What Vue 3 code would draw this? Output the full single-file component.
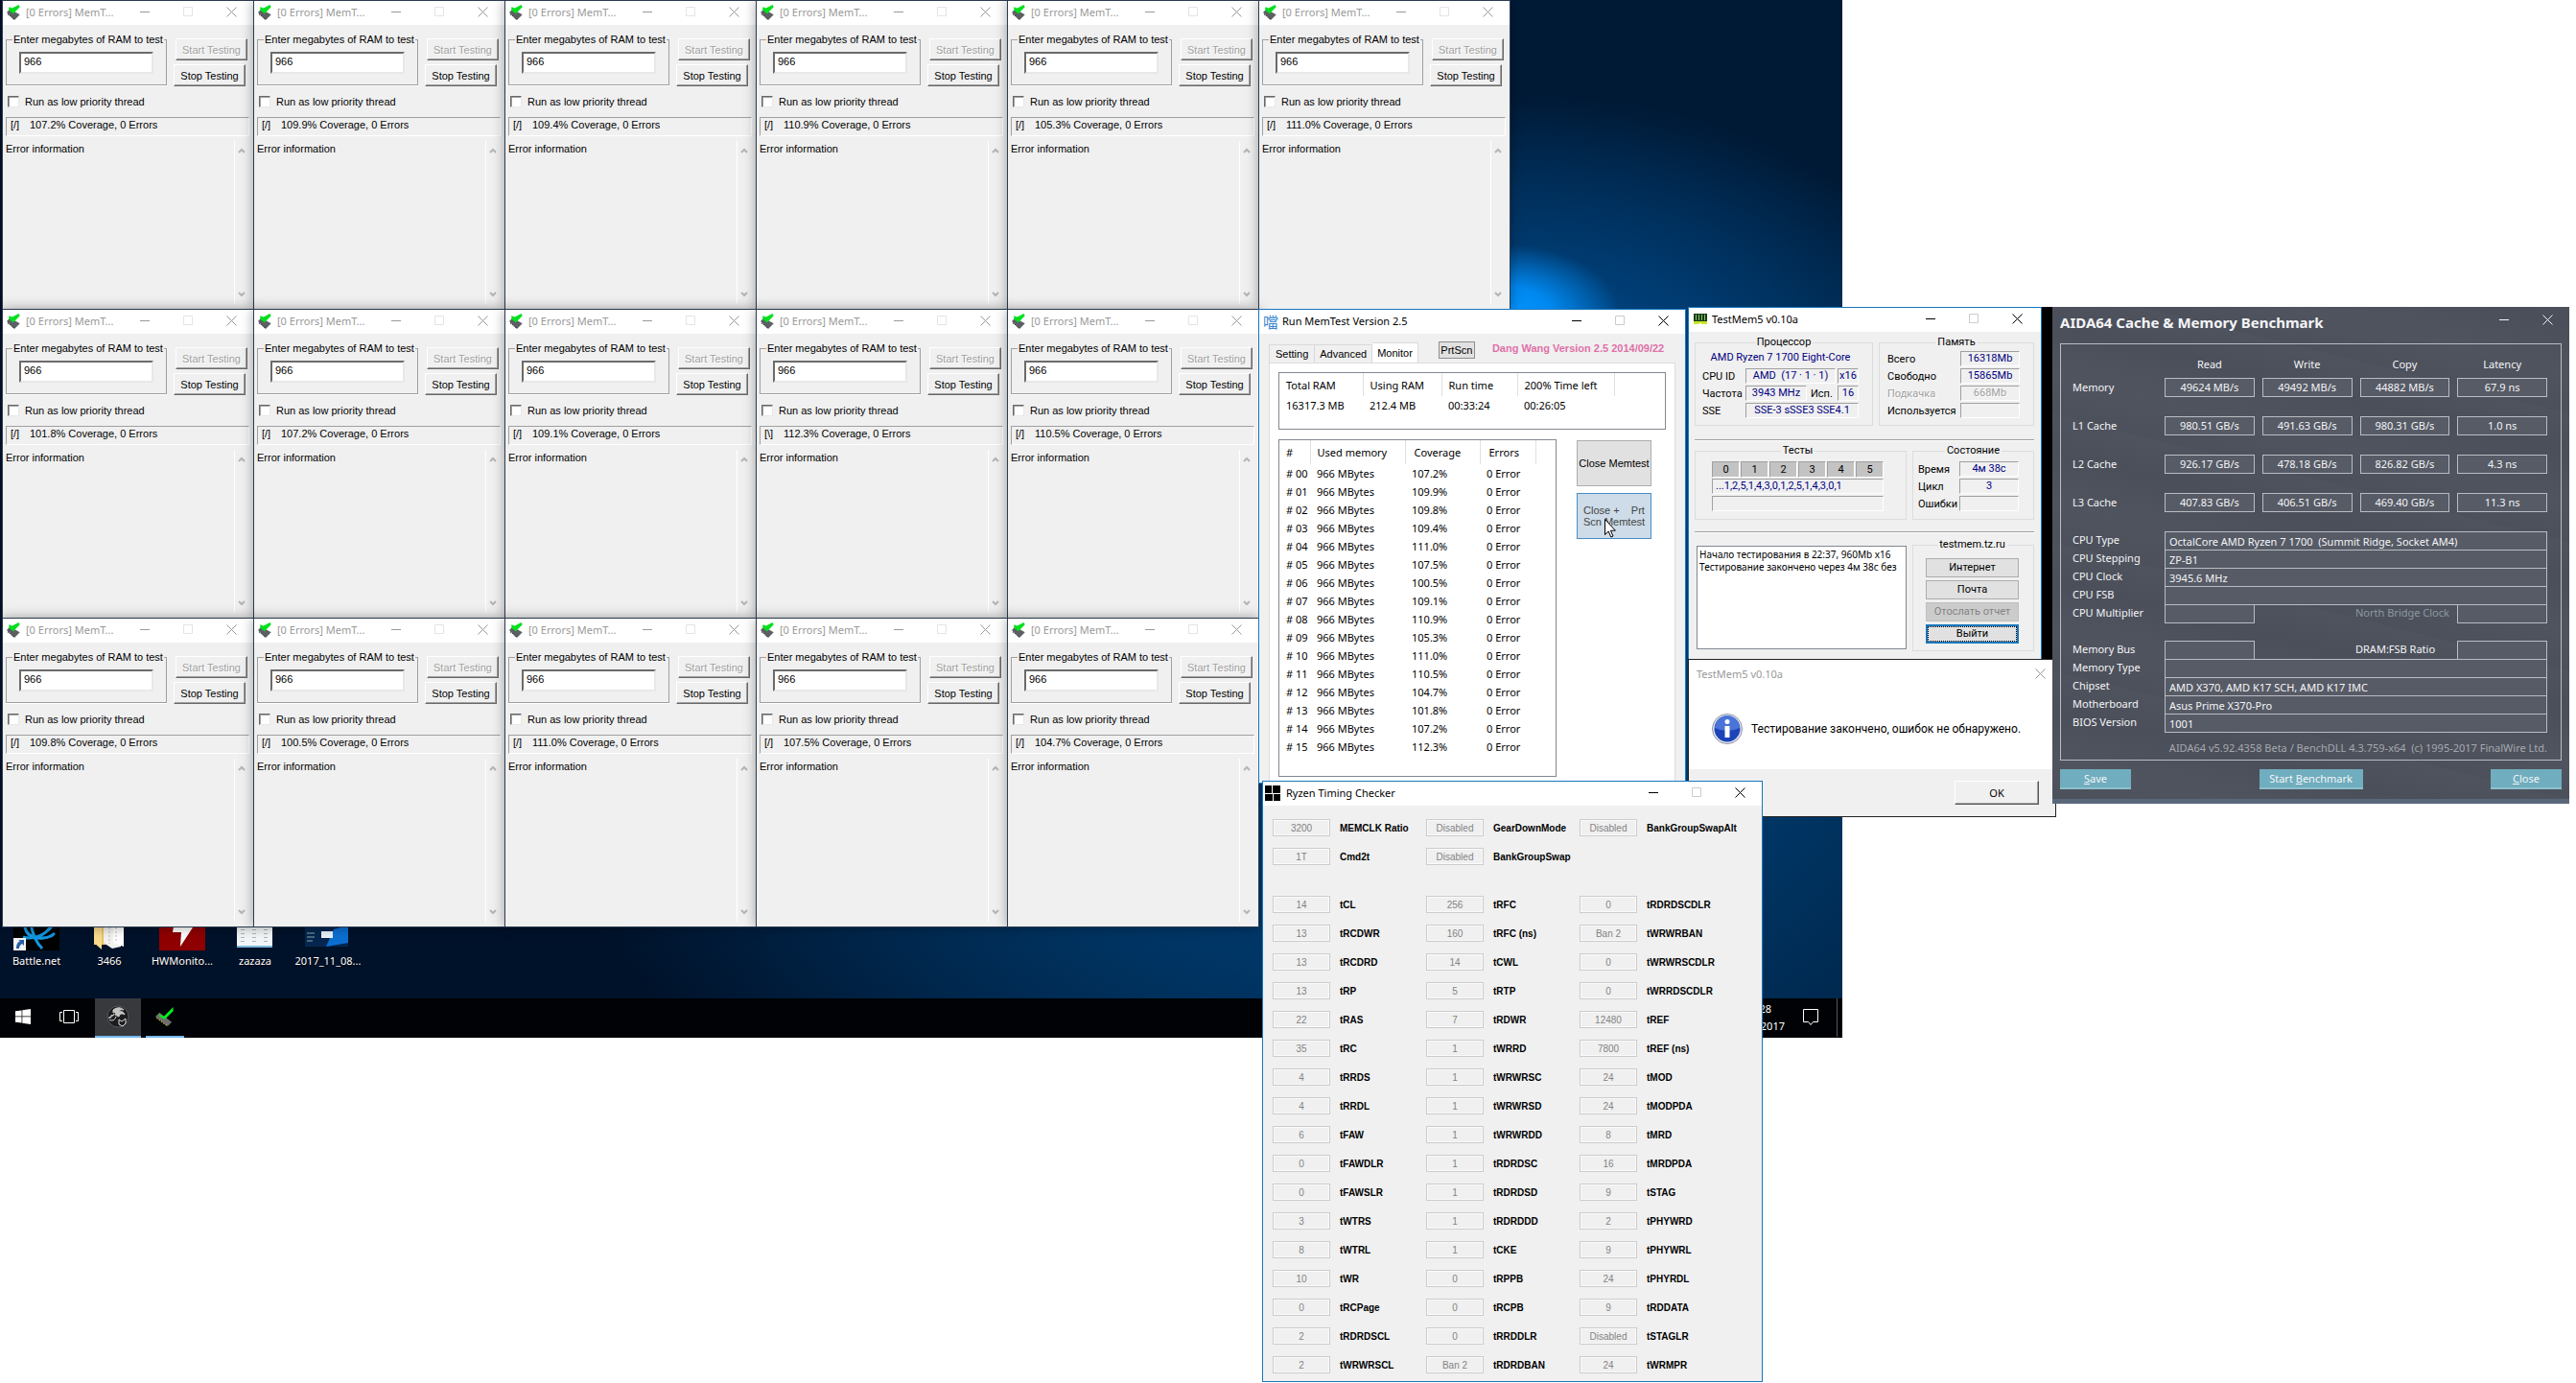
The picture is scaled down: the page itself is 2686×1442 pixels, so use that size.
<template>
  <main class="stage">
    <section class="desktop">
      <ul class="shortcuts">
        <li v-for="item in shortcuts" :key="item.label">
          <svg width="48" height="48" viewBox="0 0 48 48">
            <g v-if="item.icon === 'battle'">
              <rect width="48" height="48" fill="#000" />
              <g fill="none" stroke="#1297e0" stroke-width="3">
                <path d="M12 24c2 12 22 14 31 6M10 34c12 4 26-4 32-14M18 20c2 12 6 20 12 26" />
                <path d="M22 36c8-2 16-10 18-18M14 30c4 6 18 8 28 2" stroke-width="2" />
              </g>
              <rect y="35" width="13" height="13" fill="#f4f4f4" />
              <path d="M3 46c0-5 2-7 4-8l-2-1h6v6l-2-2c-2 1-3 3-3 5z" fill="#2b5fa8" />
            </g>
            <g v-else-if="item.icon === 'folder'">
              <path d="M8 6h20v36H8z" fill="#e9c469" />
              <path d="M18 10h18v34l-9 2-9-6z" fill="#f2f2f0" />
              <path d="M28 8h11v36l-11-4z" fill="#fff" />
              <path d="M31 12v28M24 12v29" stroke="#bbb" stroke-dasharray="2 2" />
              <path d="M8 6l8 6v35l-8-7z" fill="#f8dc8c" />
            </g>
            <g v-else-if="item.icon === 'bolt'">
              <rect width="48" height="48" fill="#8f0000" />
              <path d="M18 4h16l-4 20h5L22 44l1-15h-9z" fill="#fff" />
            </g>
            <g v-else-if="item.icon === 'sheet'">
              <rect x="5" width="37" height="44" fill="#f3f6f8" />
              <path d="M11 2v40M23 2v40M35 2v40" stroke="#b3b3b3" stroke-width="4" stroke-dasharray="1 3" />
              <path d="M5 44h37" stroke="#7cb6dc" stroke-width="2" />
            </g>
            <g v-else>
              <rect y="10" width="45" height="34" fill="#05264f" />
              <path d="M22 44l8-18 15-4v18z" fill="#0b6fd0" />
              <rect y="10" width="45" height="14" fill="#dfe8f0" />
              <rect x="17" y="28" width="12" height="7" fill="#e8f2fb" />
              <path d="M2 30h8M2 34h8M2 38h6" stroke="#8aa" />
            </g>
          </svg>
          <span>{{ item.label }}</span>
        </li>
      </ul>

      <nav class="taskbar">
        <button class="task" aria-label="Start">
          <svg width="16" height="16" viewBox="0 0 16 16" fill="#fff">
            <path d="M0 2.300L6.600 1.400v6.200H0zM7.300 1.300L16 0v7.600H7.300zM0 8.300h6.600v6.300L0 13.700zM7.300 8.300H16V16l-8.700-1.300z" />
          </svg>
        </button>
        <button class="task" aria-label="Task view">
          <svg width="20" height="16" viewBox="0 0 20 16" fill="none" stroke="#fff">
            <path d="M4.500 1.500h11v13h-11zM3 3.500H.5v9H3M17 3.500h2.500v9H17" />
          </svg>
        </button>
        <button class="task active" aria-label="Game client">
          <svg width="24" height="24" viewBox="0 0 24 24">
            <circle cx="12" cy="12" r="11" fill="#1c1c1e" stroke="#55585c" />
            <path
              d="M2 13c3 1 4-1 3-3 1 2 3 1 3-1M7 5c4-3 8-3 11 0-3-1-4 0-5 2 3-1 5 0 6 3-3-2-5-1-6 2l-4-2 1-3-3 1z"
              fill="#c5c5c5"
              stroke="#c5c5c5"
            />
            <path d="M13 15l3 2 4-3v5l-3 3-4-2zM3 15c2 2 6 1 7-3" fill="none" stroke="#e0e0e0" />
          </svg>
        </button>
        <button class="task memtest" aria-label="MemTest">
          <svg width="20" height="20" viewBox="0 0 14 14">
            <path d="M0 7l3-3 9 7-3 3z" fill="#6d6d6d" />
            <path d="M1 8l8 6" stroke="#b8a93a" stroke-dasharray="1 1" />
            <path d="M3 5l3 2 7-7v3L7 9 3 7z" fill="#00f01c" />
          </svg>
        </button>
        <div class="tray">
          <p class="clock"><span class="time">28</span><span>2017</span></p>
          <svg width="16" height="18" viewBox="0 0 16 18" fill="none" stroke="#fff">
            <path d="M.5.5h15v13h-5l-2.500 3-2.500-3h-5z" />
          </svg>
          <i class="peek"></i>
        </div>
      </nav>
    </section>

    <div class="void"></div>

    <section
      v-for="win in windows"
      :key="win.id"
      class="window"
      :class="win.kind"
      :style="{ left: win.x + 'px', top: win.y + 'px' }"
    >
      <header>
        <svg v-if="win.kind === 'mem'" width="16" height="16" viewBox="0 0 14 14">
          <path d="M0 7l3-3 9 5-5 5z" fill="#5c6064" />
          <path d="M1 8.500l6 5" stroke="#333" stroke-dasharray="1 1" />
          <path d="M2 2l3 1 6-3 1 2-6 6-4-3z" fill="#00e01c" />
        </svg>
        <span v-else-if="win.kind === 'run'" class="glyph">噹</span>
        <svg v-else-if="win.kind === 'tm5'" width="16" height="12" viewBox="0 0 16 12">
          <path d="M1 0h14v8H1z" fill="#143c14" />
          <path d="M3.500 1v6M6.500 1v6M9.500 1v6M12.500 1v6" stroke="#8dc26b" />
          <path d="M1 8h14v3H9v-1H7v1H1z" fill="#c8e62c" />
        </svg>
        <svg v-else-if="win.kind === 'rtc'" width="16" height="16" viewBox="0 0 16 16">
          <path d="M0 0h16v16H0z" fill="#000" />
          <path d="M7.500 0v8M0 8.500h16M8.500 9v7" stroke="#fff" />
        </svg>
        <h2>{{ win.title }}</h2>
        <div class="caption">
          <button v-if="win.kind !== 'msg'" aria-label="Minimize">
            <svg width="11" height="11" viewBox="0 0 11 11"><path d="M0 5.500h10" /></svg>
          </button>
          <button v-if="win.kind !== 'msg' && win.kind !== 'aida'" class="max" aria-label="Maximize" disabled>
            <svg width="11" height="11" viewBox="0 0 11 11"><path d="M.5.5h9v9h-9z" /></svg>
          </button>
          <button aria-label="Close">
            <svg width="11" height="11" viewBox="0 0 11 11"><path d="M.5.5l10 10M10.500.5l-10 10" /></svg>
          </button>
        </div>
      </header>

      <div v-if="win.kind === 'mem'" class="body">
        <div class="top">
          <fieldset>
            <legend>Enter megabytes of RAM to test</legend>
            <input type="text" value="966" aria-label="Megabytes of RAM" />
          </fieldset>
          <div class="actions">
            <button class="start" disabled>Start Testing</button>
            <button>Stop Testing</button>
          </div>
        </div>
        <div class="check">
          <input :id="'low-' + win.id" type="checkbox" />
          <label :for="'low-' + win.id">Run as low priority thread</label>
        </div>
        <p class="status"><span>{{ win.mark }}</span>{{ win.coverage }}% Coverage, 0 Errors</p>
        <div class="errors">
          <p>Error information</p>
          <div class="scroll">
            <svg width="8" height="6" viewBox="0 0 8 6"><path d="M1 5l3-3 3 3" /></svg>
            <svg width="8" height="6" viewBox="0 0 8 6"><path d="M1 1l3 3 3-3" /></svg>
          </div>
        </div>
      </div>

      <div v-else-if="win.kind === 'run'" class="body">
        <div class="tabs">
          <button class="tab">Setting</button>
          <button class="tab">Advanced</button>
          <button class="tab current">Monitor</button>
          <button class="prt">PrtScn</button>
          <strong>Dang Wang Version 2.5 2014/09/22</strong>
        </div>
        <div class="panel">
          <div class="list summary">
            <table>
              <thead>
                <tr><th>Total RAM</th><th>Using RAM</th><th>Run time</th><th>200% Time left</th></tr>
              </thead>
              <tbody>
                <tr><td>16317.3 MB</td><td>212.4 MB</td><td>00:33:24</td><td>00:26:05</td></tr>
              </tbody>
            </table>
          </div>
          <div class="split">
            <div class="list detail">
              <table>
                <thead>
                  <tr><th>#</th><th>Used memory</th><th>Coverage</th><th>Errors</th></tr>
                </thead>
                <tbody>
                  <tr v-for="(value, i) in coverage" :key="i">
                    <td># {{ String(i).padStart(2, '0') }}</td>
                    <td>966 MBytes</td>
                    <td>{{ value }}%</td>
                    <td>0 Error</td>
                  </tr>
                </tbody>
              </table>
            </div>
            <div class="side">
              <button>Close Memtest</button>
              <button class="hover">{{ 'Close +    Prt\nScn Memtest' }}</button>
            </div>
          </div>
        </div>
      </div>

      <div v-else-if="win.kind === 'tm5'" class="body">
        <div class="row cpu-row">
          <fieldset class="cpu">
            <legend>Процессор</legend>
            <p class="model">AMD Ryzen 7 1700 Eight-Core</p>
            <span>CPU ID</span><b class="wide">AMD&nbsp; (17 · 1 · 1)</b><b>x16</b>
            <span>Частота</span><b>3943 MHz</b><span class="used">Исп.</span><b>16</b>
            <span>SSE</span><b class="full">SSE-3 sSSE3 SSE4.1</b>
          </fieldset>
          <fieldset class="pairs">
            <legend>Память</legend>
            <span>Всего</span><b>16318Mb</b>
            <span>Свободно</span><b>15865Mb</b>
            <span class="off">Подкачка</span><b class="off">668Mb</b>
            <span>Используется</span><b></b>
          </fieldset>
        </div>
        <hr />
        <div class="row test-row">
          <fieldset class="tests">
            <legend>Тесты</legend>
            <div class="cells"><i v-for="n in 6" :key="n">{{ n - 1 }}</i></div>
            <b>...1,2,5,1,4,3,0,1,2,5,1,4,3,0,1</b>
            <b></b>
          </fieldset>
          <fieldset class="pairs state">
            <legend>Состояние</legend>
            <span>Время</span><b>4м 38с</b>
            <span>Цикл</span><b>3</b>
            <span>Ошибки</span><b></b>
          </fieldset>
        </div>
        <hr />
        <div class="row log-row">
          <ul class="log">
            <li>Начало тестирования в 22:37, 960Mb x16</li>
            <li>Тестирование закончено через 4м 38с без</li>
          </ul>
          <fieldset class="links">
            <legend>testmem.tz.ru</legend>
            <button>Интернет</button>
            <button>Почта</button>
            <button disabled>Отослать отчет</button>
            <button class="focused">Выйти</button>
          </fieldset>
        </div>
      </div>

      <div v-else-if="win.kind === 'msg'" class="body">
        <div class="message">
          <svg width="32" height="32" viewBox="0 0 32 32">
            <circle cx="16" cy="16" r="15.500" fill="#e4e6ee" stroke="#8c93a5" />
            <circle cx="16" cy="16" r="13.500" fill="#1c43b8" />
            <path d="M3 15a13 13 0 0 1 26 0q-13 6-26 0z" fill="#4a74d8" />
            <circle cx="16" cy="8.500" r="2.500" fill="#fff" />
            <path d="M13.500 13h5v12h-5z" fill="#fff" />
          </svg>
          <p>Тестирование закончено, ошибок не обнаружено.</p>
        </div>
        <footer><button>OK</button></footer>
      </div>

      <div v-else-if="win.kind === 'aida'" class="body">
        <div class="frame">
          <table class="bench">
            <thead>
              <tr><td></td><th>Read</th><th>Write</th><th>Copy</th><th>Latency</th></tr>
            </thead>
            <tbody>
              <tr v-for="row in bench" :key="row[0]">
                <th>{{ row[0] }}</th>
                <td v-for="cell in row.slice(1)" :key="cell"><span>{{ cell }}</span></td>
              </tr>
            </tbody>
          </table>
          <div class="facts">
            <template v-for="(fact, i) in facts" :key="i">
              <label :for="'fact-' + i">{{ fact.label }}</label>
              <input v-if="!fact.extra" :id="'fact-' + i" class="long" :value="fact.value" readonly />
              <template v-else>
                <input :id="'fact-' + i" readonly />
                <label class="extra" :class="{ dim: fact.dim }" :for="'extra-' + i">{{ fact.extra }}</label>
                <input :id="'extra-' + i" readonly />
                <i v-if="fact.dim" class="gap"></i>
              </template>
            </template>
          </div>
          <p class="version">AIDA64 v5.92.4358 Beta / BenchDLL 4.3.759-x64&nbsp; (c) 1995-2017 FinalWire Ltd.</p>
        </div>
        <footer>
          <button><u>S</u>ave</button>
          <button class="bench-start">Start <u>B</u>enchmark</button>
          <button><u>C</u>lose</button>
        </footer>
      </div>

      <div v-else class="body">
        <div v-for="(row, r) in timings" :key="r" class="timing" :class="{ last: r === 1 }">
          <template v-for="(cell, c) in row" :key="c">
            <input :id="'t-' + r + '-' + c" :value="cell[0]" disabled />
            <label :for="'t-' + r + '-' + c">{{ cell[1] }}</label>
          </template>
        </div>
      </div>
    </section>

    <svg class="pointer" width="12" height="20" viewBox="0 0 12 20">
      <path d="M.5.5v16l3.700-3.500 2.600 6 2.200-1-2.600-5.800h5z" fill="#fff" stroke="#000" />
    </svg>
  </main>
</template>

<script setup>
const shortcuts = [
  { label: 'Battle.net', icon: 'battle' },
  { label: '3466', icon: 'folder' },
  { label: 'HWMonito...', icon: 'bolt' },
  { label: 'zazaza', icon: 'sheet' },
  { label: '2017_11_08...', icon: 'shot' },
]

// MemTest instances, tiled row by row
const tiles = [
  ['107.2', '109.9', '109.4', '110.9', '105.3', '111.0'],
  ['101.8', '107.2', '109.1', '112.3', '110.5'],
  ['109.8', '100.5', '111.0', '107.5', '104.7'],
]

const memtests = tiles.flatMap((row, r) =>
  row.map((value, c) => ({
    id: `mem-${r}-${c}`,
    kind: 'mem',
    title: '[0 Errors] MemT...',
    x: 2 + c * 262,
    y: r * 322,
    coverage: value,
    mark: value === '112.3' ? '[\\]' : '[/]',
  }))
)

const windows = [
  ...memtests,
  { id: 'run', kind: 'run', title: 'Run MemTest Version 2.5', x: 1312, y: 322 },
  { id: 'tm5', kind: 'tm5', title: 'TestMem5 v0.10a', x: 1760, y: 320 },
  { id: 'msg', kind: 'msg', title: 'TestMem5 v0.10a', x: 1760, y: 687 },
  { id: 'aida', kind: 'aida', title: 'AIDA64 Cache & Memory Benchmark', x: 2140, y: 320 },
  { id: 'rtc', kind: 'rtc', title: 'Ryzen Timing Checker', x: 1316, y: 814 },
]

const coverage = [
  '107.2', '109.9', '109.8', '109.4', '111.0', '107.5', '100.5', '109.1',
  '110.9', '105.3', '111.0', '110.5', '104.7', '101.8', '107.2', '112.3',
]

const bench = [
  ['Memory', '49624 MB/s', '49492 MB/s', '44882 MB/s', '67.9 ns'],
  ['L1 Cache', '980.51 GB/s', '491.63 GB/s', '980.31 GB/s', '1.0 ns'],
  ['L2 Cache', '926.17 GB/s', '478.18 GB/s', '826.82 GB/s', '4.3 ns'],
  ['L3 Cache', '407.83 GB/s', '406.51 GB/s', '469.40 GB/s', '11.3 ns'],
]

const facts = [
  { label: 'CPU Type', value: 'OctalCore AMD Ryzen 7 1700  (Summit Ridge, Socket AM4)' },
  { label: 'CPU Stepping', value: 'ZP-B1' },
  { label: 'CPU Clock', value: '3945.6 MHz' },
  { label: 'CPU FSB', value: '' },
  { label: 'CPU Multiplier', extra: 'North Bridge Clock', dim: true },
  { label: 'Memory Bus', extra: 'DRAM:FSB Ratio' },
  { label: 'Memory Type', value: '' },
  { label: 'Chipset', value: 'AMD X370, AMD K17 SCH, AMD K17 IMC' },
  { label: 'Motherboard', value: 'Asus Prime X370-Pro' },
  { label: 'BIOS Version', value: '1001' },
]

const timings = [
  [['3200', 'MEMCLK Ratio'], ['Disabled', 'GearDownMode'], ['Disabled', 'BankGroupSwapAlt']],
  [['1T', 'Cmd2t'], ['Disabled', 'BankGroupSwap']],
  [['14', 'tCL'], ['256', 'tRFC'], ['0', 'tRDRDSCDLR']],
  [['13', 'tRCDWR'], ['160', 'tRFC (ns)'], ['Ban 2', 'tWRWRBAN']],
  [['13', 'tRCDRD'], ['14', 'tCWL'], ['0', 'tWRWRSCDLR']],
  [['13', 'tRP'], ['5', 'tRTP'], ['0', 'tWRRDSCDLR']],
  [['22', 'tRAS'], ['7', 'tRDWR'], ['12480', 'tREF']],
  [['35', 'tRC'], ['1', 'tWRRD'], ['7800', 'tREF (ns)']],
  [['4', 'tRRDS'], ['1', 'tWRWRSC'], ['24', 'tMOD']],
  [['4', 'tRRDL'], ['1', 'tWRWRSD'], ['24', 'tMODPDA']],
  [['6', 'tFAW'], ['1', 'tWRWRDD'], ['8', 'tMRD']],
  [['0', 'tFAWDLR'], ['1', 'tRDRDSC'], ['16', 'tMRDPDA']],
  [['0', 'tFAWSLR'], ['1', 'tRDRDSD'], ['9', 'tSTAG']],
  [['3', 'tWTRS'], ['1', 'tRDRDDD'], ['2', 'tPHYWRD']],
  [['8', 'tWTRL'], ['1', 'tCKE'], ['9', 'tPHYWRL']],
  [['10', 'tWR'], ['0', 'tRPPB'], ['24', 'tPHYRDL']],
  [['0', 'tRCPage'], ['0', 'tRCPB'], ['9', 'tRDDATA']],
  [['2', 'tRDRDSCL'], ['0', 'tRRDDLR'], ['Disabled', 'tSTAGLR']],
  [['2', 'tWRWRSCL'], ['Ban 2', 'tRDRDBAN'], ['24', 'tWRMPR']],
]
</script>

<style>
body {
  background: #fff;
}
</style>

<style scoped>
* {
  box-sizing: border-box;
}
.stage {
  position: relative;
  min-height: 100vh;
  overflow: hidden;
  font-family: "Noto Sans", sans-serif;
  font-size: 11px;
  color: #000;
}
button,
input {
  font: inherit;
  color: inherit;
  margin: 0;
  padding: 0;
  border: 0;
  border-radius: 0;
  background: none;
  outline: none;
}
p,
h2,
ul,
fieldset {
  margin: 0;
  padding: 0;
}
ul {
  list-style: none;
}
i {
  font-style: normal;
}
fieldset {
  min-width: 0;
}
table {
  border-collapse: collapse;
  border-spacing: 0;
}
th {
  font-weight: normal;
}

/* desktop */
.desktop {
  display: flex;
  flex-direction: column;
  justify-content: flex-end;
  width: calc(100% - 765px);
  height: 75vh;
  background:
    radial-gradient(ellipse 120px 75px at 1570px 330px, #0096ff 0%, #0089f0 40%, rgba(0, 90, 180, 0) 100%),
    radial-gradient(ellipse 440px 300px at 1600px 400px, #004a8c 0%, rgba(0, 44, 88, 0) 100%),
    radial-gradient(ellipse 900px 620px at 1450px 720px, #00437e 0%, #003564 50%, rgba(0, 24, 52, 0) 100%),
    linear-gradient(to right, #00122a 40%, #001a36 80%);
}
.shortcuts {
  display: flex;
  margin-bottom: 30px;
}
.shortcuts li {
  display: flex;
  flex-direction: column;
  align-items: center;
  gap: 2px;
  width: 76px;
  line-height: 18px;
  color: #fff;
  text-shadow: 0 1px 2px #000;
}
.taskbar {
  display: flex;
  height: 41px;
  background: #010205;
}
.task {
  display: flex;
  align-items: center;
  justify-content: center;
  width: 48px;
  border-bottom: 2px solid transparent;
}
.task.active {
  margin-left: 3px;
  background: #37393d;
  border-color: #76b9ed;
}
.task.memtest {
  width: 40px;
  margin-left: 5px;
  border-color: #76b9ed;
}
.tray {
  display: flex;
  align-items: center;
  margin-left: auto;
  gap: 19px;
  color: #fff;
}
.clock {
  display: flex;
  flex-direction: column;
  align-items: flex-end;
  line-height: 18px;
}
.time {
  padding-right: 14px;
}
.peek {
  width: 6px;
  height: 40px;
  border-left: 1px solid #555;
}
.void {
  position: absolute;
  left: 2128px;
  top: 320px;
  width: 12px;
  height: 368px;
  background: #000;
}

/* window chrome */
.window {
  position: absolute;
  display: flex;
  flex-direction: column;
  border: 1px solid #1877bd;
  background: #f0f0f0;
}
.window header {
  display: flex;
  align-items: center;
  flex: none;
  gap: 4px;
  height: 25px;
  padding: 0 0 2px 4px;
  background: #fff;
}
.window h2 {
  font-size: 11px;
  font-weight: normal;
  white-space: nowrap;
}
.caption {
  display: flex;
  margin-left: auto;
}
.caption button {
  display: flex;
  align-items: center;
  justify-content: center;
  width: 45px;
  height: 23px;
}
.caption path {
  fill: none;
  stroke: currentColor;
}
.caption .max {
  color: #ccc;
}
.body {
  flex: 1;
}

/* memtest */
.mem {
  width: 263px;
  height: 323px;
  border-color: #2b3b50;
  box-shadow: 0 0 12px rgba(0, 0, 0, 0.35);
  font-family: "Liberation Sans", sans-serif;
}
.mem header {
  color: #999;
  font-family: "Noto Sans", sans-serif;
}
.mem .max {
  color: #e4e4e4;
}
.mem .body {
  display: flex;
  flex-direction: column;
  padding: 8px 4px 5px 3px;
}
.top {
  display: flex;
  justify-content: space-between;
  height: 57px;
}
.top fieldset {
  width: 168px;
  height: 55px;
  padding: 0 13px;
  border: 1px solid #a0a0a0;
  box-shadow: 0 1px 0 #fff;
}
.top legend {
  margin-left: -7px;
  padding: 0 1px;
  line-height: 14px;
  white-space: nowrap;
}
.top input {
  display: block;
  width: 140px;
  height: 23px;
  margin-top: 6px;
  padding: 0 3px 4px;
  background: #fff;
  border: 2px solid;
  border-color: #6b6b6b #e8e8e8 #e8e8e8 #6b6b6b;
}
.actions {
  display: flex;
  flex-direction: column;
  gap: 4px;
  width: 77px;
  margin-right: 2px;
  padding-top: 6px;
}
.actions button {
  flex: none;
  width: 75px;
  height: 23px;
  border: 1px solid;
  border-color: #fff #696969 #696969 #fff;
  box-shadow: inset -1px -1px 0 #a0a0a0;
}
.actions .start {
  align-self: flex-end;
  color: #a0a0a0;
  text-shadow: 1px 1px 0 #fff;
}
.check {
  display: flex;
  align-items: center;
  gap: 6px;
  height: 14px;
  margin: 8px 0 9px 2px;
}
.check input {
  appearance: none;
  width: 12px;
  height: 12px;
  background: #fff;
  border: 1px solid;
  border-color: #696969 #e8e8e8 #e8e8e8 #696969;
  box-shadow: inset 1px 1px 0 #a0a0a0;
}
.status {
  display: flex;
  height: 20px;
  padding-left: 4px;
  line-height: 14px;
  border: 1px solid;
  border-color: #a0a0a0 #fff #fff #a0a0a0;
}
.status span {
  width: 20px;
}
.errors {
  display: flex;
  flex: 1;
  justify-content: space-between;
  margin-top: 5px;
  line-height: 16px;
}
.scroll {
  display: flex;
  flex-direction: column;
  justify-content: space-between;
  width: 16px;
  padding: 7px 0 7px 3px;
  border-left: 1px solid #fff;
}
.scroll path {
  fill: none;
  stroke: #b5b5b5;
  stroke-width: 2;
}

/* run memtest */
.run {
  width: 446px;
  height: 495px;
}
.glyph {
  width: 16px;
  font-family: "Noto Sans CJK TC", sans-serif;
  font-size: 16px;
  line-height: 16px;
  color: #3b87d0;
}
.run .body {
  display: flex;
  flex-direction: column;
  padding: 0 10px;
}
.tabs {
  display: flex;
  flex: none;
  align-items: flex-end;
  height: 30px;
  font-family: "Liberation Sans", sans-serif;
}
.tab {
  height: 19px;
  padding: 0 6px;
  border: 1px solid #d9d9d9;
  border-bottom: 0;
}
.tab + .tab {
  padding: 0 5px;
  border-left: 0;
}
.tab.current {
  height: 21px;
  background: #fff;
}
.prt {
  width: 38px;
  height: 18px;
  margin: 0 18px 4px 21px;
  background: #e1e1e1;
  border: 1px solid #8e8e8e;
}
.tabs strong {
  align-self: flex-start;
  margin: 8px -10px 0 0;
  line-height: 14px;
  white-space: nowrap;
  color: #e070a8;
}
.panel {
  flex: 1;
  padding: 9px;
  background: #fff;
  border: 1px solid #dcdcdc;
  border-bottom: 0;
}
.list {
  border: 1px solid #828790;
}
.list table {
  table-layout: fixed;
}
.list th {
  height: 24px;
  padding: 0 7px;
  text-align: left;
  white-space: nowrap;
  border-right: 1px solid #e0e0e0;
}
.list td {
  height: 19px;
  padding: 0 7px;
  white-space: nowrap;
}
.summary {
  height: 60px;
}
.summary table {
  width: 350px;
}
.summary th:nth-child(1) {
  width: 87px;
}
.summary th:nth-child(2) {
  width: 82px;
}
.summary th:nth-child(3) {
  width: 79px;
}
.split {
  display: flex;
  gap: 21px;
  margin-top: 10px;
}
.detail {
  width: 290px;
  height: 352px;
}
.detail table {
  width: 268px;
}
.detail th {
  height: 25px;
}
.detail th:nth-child(1) {
  width: 32px;
}
.detail th:nth-child(2) {
  width: 99px;
}
.detail th:nth-child(3) {
  width: 78px;
}
.detail th:nth-child(n + 3) {
  padding-left: 9px;
}
.detail td {
  padding-right: 0;
}
.side {
  display: flex;
  flex-direction: column;
  gap: 7px;
  padding-top: 1px;
  font-family: "Liberation Sans", sans-serif;
}
.side button {
  width: 78px;
  height: 48px;
  white-space: pre;
  background: #e1e1e1;
  border: 1px solid #adadad;
}
.side .hover {
  color: #444;
  background: #cddce8;
  border-color: #4a8cc8;
}
.pointer {
  position: absolute;
  left: 1673px;
  top: 541px;
}

/* testmem5 */
.tm5 {
  width: 369px;
  height: 368px;
}
.tm5 header {
  padding-right: 2px;
}
.tm5 .body {
  padding: 4px 7px 0 6px;
  font-family: Roboto, sans-serif;
  white-space: nowrap;
}
.row {
  display: flex;
  gap: 6px;
}
.tm5 fieldset {
  border: 1px solid #dcdcdc;
}
.tm5 legend {
  margin: 0 auto;
  padding: 0 2px;
  line-height: 14px;
}
.tm5 b {
  height: 16px;
  font-weight: normal;
  line-height: 14px;
  text-align: center;
  color: #000080;
  border: 1px solid;
  border-color: #a0a0a0 #fff #fff #a0a0a0;
}
.tm5 hr {
  height: 2px;
  margin: 0;
  border: 0;
  border-top: 1px solid #a0a0a0;
  background: #fff;
}
.cpu-row {
  height: 108px;
}
.cpu-row fieldset {
  height: 94px;
}
.cpu {
  display: grid;
  flex: 1;
  grid-template-columns: 45px 64px 32px 22px;
  grid-auto-rows: 16px;
  align-content: start;
  gap: 2px 0;
  padding: 2px 7px 0;
  line-height: 17px;
}
.model {
  grid-column: 1 / -1;
  line-height: 14px;
  text-align: center;
  color: #000080;
}
.cpu .wide {
  grid-column: 2 / 4;
  margin-right: 2px;
}
.cpu .full {
  grid-column: 2 / 5;
}
.used {
  padding-left: 4px;
}
.pairs {
  display: grid;
  grid-template-columns: 76px 62px;
  grid-auto-rows: 16px;
  align-content: start;
  gap: 2px 0;
  width: 162px;
  padding: 2px 8px 0;
  line-height: 17px;
}
.tm5 .off {
  color: #a0a0a0;
  text-shadow: 1px 1px 0 #fff;
}
.test-row {
  height: 94px;
  padding-top: 3px;
}
.test-row fieldset {
  height: 79px;
}
.tests {
  display: grid;
  flex: 1;
  grid-auto-rows: 16px;
  align-content: start;
  gap: 2px;
  padding: 4px 23px 0 17px;
}
.tests .cells {
  display: grid;
  grid-template-columns: repeat(6, 1fr);
  gap: 1px;
}
.cells i {
  line-height: 15px;
  text-align: center;
  background: #c3c3c3;
  border: 1px solid;
  border-color: #a0a0a0 #fff #fff #a0a0a0;
}
.tests b {
  padding-left: 3px;
  text-align: left;
}
.pairs.state {
  grid-template-columns: 43px 62px;
  width: 127px;
  padding: 4px 5px 0;
}
.log-row {
  padding-top: 5px;
}
.log {
  flex: 1;
  min-width: 0;
  height: 108px;
  margin: 8px 0 0 2px;
  padding: 2px;
  font-family: "Noto Sans", sans-serif;
  font-size: 10px;
  line-height: 13px;
  background: #fff;
  border: 1px solid #828790;
}
.links {
  display: grid;
  flex: none;
  grid-auto-rows: 20px;
  align-content: start;
  gap: 3px;
  width: 127px;
  height: 118px;
  padding: 7px 15px 0 13px;
}
.links button {
  line-height: 16px;
  background: #e1e1e1;
  border: 1px solid #adadad;
}
.links button:disabled {
  color: #838383;
  background: #ccc;
  border-color: #bfbfbf;
}
.links .focused {
  border: 2px solid #1877bd;
  outline: 1px dotted #000;
  outline-offset: -3px;
}

/* message box */
.msg {
  width: 384px;
  height: 165px;
  border-color: #222;
}
.msg header {
  height: 30px;
  padding: 0 0 2px 8px;
  color: #999;
}
.msg .caption button {
  width: 31px;
}
.msg .body {
  display: flex;
  flex-direction: column;
}
.message {
  display: flex;
  flex: 1;
  align-items: center;
  gap: 9px;
  padding: 0 24px;
  font-family: Roboto, sans-serif;
  font-size: 12px;
  white-space: nowrap;
  background: #fff;
}
.msg footer {
  display: flex;
  justify-content: flex-end;
  height: 49px;
  padding: 12px 17px;
}
.msg footer button {
  width: 88px;
  border: 1px solid;
  border-color: #fff #555 #555 #fff;
  box-shadow: inset -1px -1px 0 #a0a0a0;
}

/* aida64 */
.aida {
  width: 539px;
  height: 518px;
  color: #f4f5f7;
  border: 0;
  border-bottom: 5px solid #5b677b;
  background: repeating-linear-gradient(14deg, #4c505b 0, #50545f 40px, #4b4f5a 90px, #4f535e 130px);
}
.aida header {
  height: 38px;
  padding: 0 0 6px 8px;
  background: none;
}
.aida h2 {
  font-size: 15px;
  font-weight: bold;
}
.aida .caption {
  align-self: flex-start;
  padding-top: 2px;
}
.aida .body {
  padding: 0 8px;
}
.frame {
  height: 435px;
  padding: 8px 14px 0 12px;
  border: 1px solid #b9bcc2;
}
.bench {
  width: 100%;
  table-layout: fixed;
}
.bench th,
.bench td {
  padding: 0;
}
.bench thead th {
  height: 27px;
  padding: 0 0 3px 8px;
}
.bench thead td {
  width: 88px;
}
.bench tbody tr {
  height: 40px;
  vertical-align: top;
}
.bench tbody th {
  line-height: 20px;
  text-align: left;
}
.bench tbody td {
  padding-left: 8px;
}
.bench span {
  display: block;
  height: 20px;
  line-height: 18px;
  text-align: center;
  background: #575b66;
  border: 1px solid #b9bcc2;
}
.facts {
  display: grid;
  grid-template-columns: 96px 94px 105px 1fr 94px;
  grid-auto-rows: 19px;
  line-height: 18px;
}
.facts input {
  width: 100%;
  height: 20px;
  padding: 0 4px;
  background: #575b66;
  border: 1px solid #b9bcc2;
}
.facts .long {
  grid-column: 2 / -1;
}
.facts .extra {
  grid-column: 4;
  white-space: nowrap;
}
.facts .dim {
  color: #8b9a9f;
}
.facts .gap {
  grid-column: 1 / -1;
}
.version {
  margin-top: 9px;
  text-align: right;
  color: #a5a8ae;
  white-space: nowrap;
}
.aida footer {
  display: flex;
  justify-content: space-between;
  margin-top: 9px;
}
.aida footer button {
  width: 74px;
  height: 21px;
  background: #70adbe;
  border-bottom: 2px solid #8cc0ce;
}
.aida footer .bench-start {
  width: 108px;
}

/* ryzen timing checker */
.rtc {
  width: 522px;
  height: 627px;
}
.rtc header {
  gap: 6px;
  padding-left: 2px;
}
.rtc .body {
  padding: 14px 10px 0;
  font-family: "Liberation Sans", sans-serif;
  font-size: 10px;
}
.timing {
  display: grid;
  grid-template-columns: repeat(3, 60px 100px);
  align-items: center;
  height: 18px;
  margin-bottom: 12px;
}
.timing.last {
  margin-bottom: 32px;
}
.timing input {
  width: 60px;
  height: 18px;
  text-align: center;
  color: #838383;
  border: 1px solid #ccc;
  box-shadow: inset 0 0 0 1px #fafafa;
}
.timing label {
  padding-left: 10px;
  font-weight: bold;
}
</style>
